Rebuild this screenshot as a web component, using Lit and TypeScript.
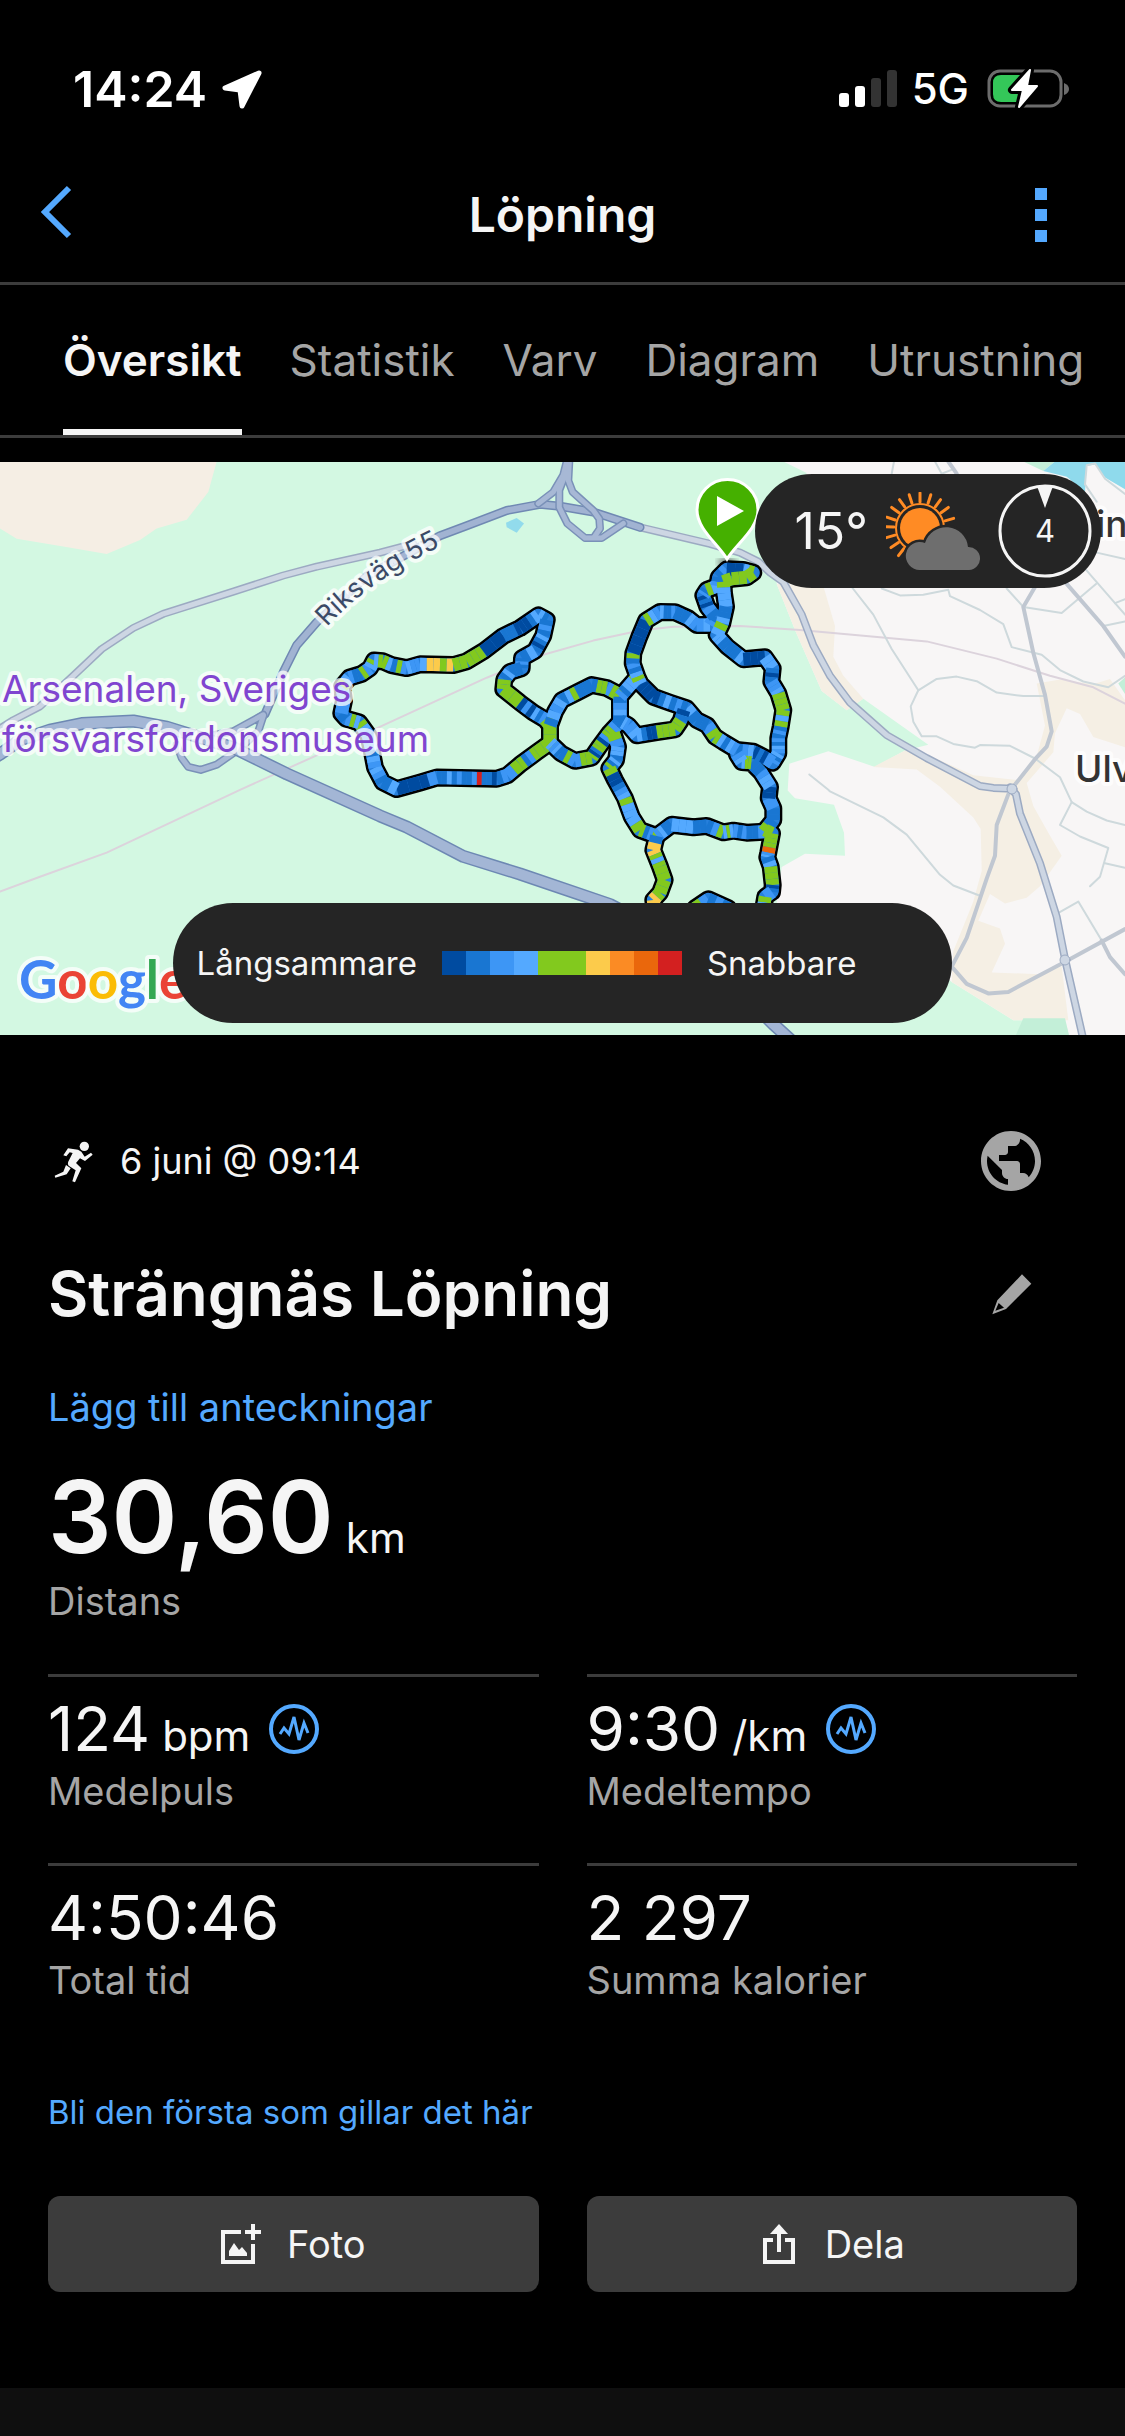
import { LitElement, html, svg, css } from "lit";
import { customElement } from "lit/decorators.js";

type Point = [number, number];
type Leg = [number, number, string?];
type Project = (x: number, y: number) => Point;

const sheet = (originX: number, stepY: number): Project => (x, y) => [originX + x / 3, y / stepY - 12];
const west = sheet(0, 2.613);
const centre = sheet(320, 2.613);
const north = sheet(560, 3);
const east = sheet(740, 2.613);

const points = (project: Project, flat: number[]): string => {
  const out: string[] = [];
  for (let i = 0; i < flat.length; i += 2) {
    out.push(project(flat[i], flat[i + 1]).map((n) => n.toFixed(1)).join(","));
  }
  return out.join(" ");
};

/* Pace scale, slow to fast. */
const pace: Record<string, string> = {
  "1": "#004ba0",
  "2": "#1976d2",
  "3": "#3d96f5",
  "4": "#54a9ff",
  g: "#82c91e",
  y: "#fccb4b",
  o: "#fb8b24",
  e: "#ea670c",
  r: "#d32020",
};

const track: { project: Project; legs: Leg[] }[] = [
  {
    project: centre,
    legs: [
      [690, 765, "gg"], [650, 790, "g32g"], [600, 822, "g3"], [562, 850, "32"], [530, 859, "122r32232422"],
      [350, 856, "31"], [300, 869, "11"], [230, 886, "42"], [188, 868, "234"], [165, 830, "342"],
      [155, 785, "43"], [145, 745, "34g"], [118, 712, "4g3"], [78, 702, "2"], [64, 688, "3"],
      [72, 655, "4"], [66, 618, "g4"], [88, 595, "322"], [125, 585, "g3"], [150, 570, "4g"],
      [162, 550, "4g"], [188, 552, "g4"], [215, 562, "2g3"], [260, 570, "433"], [300, 560, "4yygy"],
      [400, 562, "gg"], [440, 552, "ggg"], [490, 526, "11"], [550, 486, "2221"], [600, 465, "1124"],
      [655, 432, "42"], [680, 444, "232"], [670, 485, "4212"], [645, 525, "42"], [606, 544, "232"],
      [605, 570, "22"], [570, 580, "42"], [553, 600, "gg"], [550, 625, "gg"], [600, 660, "131"],
      [640, 686, "423"], [675, 704, "g"], [690, 720, "gg"], [690, 765],
    ],
  },
  {
    project: centre,
    legs: [
      [690, 765, "4342"], [722, 792, "2g3"], [765, 812, "3gg"], [815, 804, "g12g"], [838, 775, "g13g"],
      [868, 740, "g32"], [900, 710, "23"], [900, 640, "gg3"], [860, 622, "gg2"], [815, 614, "22"],
      [770, 634, "g42"], [725, 654, "43"], [705, 684, "42"], [690, 720],
    ],
  },
  {
    project: north,
    legs: [
      [180, 815, "2432"], [180, 740, "324"], [210, 706, "4g"], [232, 680, "423"], [218, 640, "2g"],
      [220, 610, "11"], [238, 560, "11"], [258, 512, "g43"], [300, 486, "4223"], [345, 487, "22"],
      [385, 505, "43"], [410, 525, "34"], [450, 525, "32"], [465, 500, "23"], [442, 470, "121"],
      [430, 436, "32"], [440, 420, "g4"], [472, 408, "32"], [476, 382, "23"], [500, 358, "11"],
      [550, 360, "4g"], [580, 368, "g"], [560, 382, "gg"], [515, 386, "g"], [490, 395, "g4"],
      [492, 430, "44"], [498, 470, "224"], [487, 520, "g4"], [470, 555, "4422"], [502, 590, "224"],
      [550, 628, "111"], [615, 622, "44"], [638, 655, "212"], [634, 695, "334"], [655, 730, "ggg"],
      [670, 780, "g4g"], [662, 830, "232"], [655, 865, "3243"], [655, 910, "423"], [638, 938, "3"],
      [618, 925, "121"], [580, 905, "432"], [530, 900, "342"], [490, 876, "4g"], [465, 860, "g3"],
      [442, 826, "22"], [410, 810, "24"], [380, 775, "232"], [330, 758, "421"], [280, 740, "111"],
      [242, 702, "4g"], [232, 680],
    ],
  },
  {
    project: north,
    legs: [
      [372, 780, "12"], [362, 812, "gg"], [345, 838, "ggg"], [290, 846, "1124"], [230, 856, "43"],
      [205, 826, "342"], [180, 812],
    ],
  },
  {
    project: north,
    legs: [
      [160, 850, "g3"], [174, 890, "442"], [168, 930, "42g"], [148, 955, "g1"], [165, 990, "1234"],
      [195, 1045, "g44"], [215, 1100, "4g"], [240, 1140, "g23g"], [290, 1158, "3422"], [335, 1124, "444"],
      [400, 1132, "22"], [440, 1128, "23g"], [490, 1147, "4g4"], [520, 1142, "323"], [560, 1148, "223"],
      [612, 1145, "g2"], [640, 1110, "22"], [640, 1075, "3"], [626, 1045, "11"], [630, 1010, "443"],
      [602, 966, "22"], [574, 938, "gg4"], [545, 936, "43"], [530, 912],
    ],
  },
  {
    project: north,
    legs: [
      [615, 1140, "gg"], [636, 1150, "ggg"], [628, 1192, "e"], [625, 1208, "34"], [622, 1222, "24"],
      [632, 1250, "ggg"], [638, 1305, "12"], [636, 1326, "3"], [616, 1340, "g4"], [610, 1375],
    ],
  },
  {
    project: north,
    legs: [
      [290, 1158, "2y"], [280, 1200, "yg4g"], [300, 1250, "gg"], [314, 1290, "gg"], [300, 1328, "gy"],
      [280, 1350, "y"], [283, 1375],
    ],
  },
  { project: north, legs: [[405, 1375, "g3"], [445, 1348, "232"], [505, 1375]] },
];

const wholeLine = (t: { project: Project; legs: Leg[] }) =>
  t.legs.map(([x, y]) => t.project(x, y).map((n) => n.toFixed(1)).join(",")).join(" ");

const paceSlices = track.flatMap(({ project, legs }) =>
  legs.slice(0, -1).flatMap(([x, y, codes = "2"], i) => {
    const [ax, ay] = project(x, y);
    const [bx, by] = project(legs[i + 1][0], legs[i + 1][1]);
    return [...codes].map((code, k) => {
      const s = k / codes.length;
      const e = (k + 1) / codes.length;
      return {
        colour: pace[code],
        x1: ax + (bx - ax) * s,
        y1: ay + (by - ay) * s,
        x2: ax + (bx - ax) * e,
        y2: ay + (by - ay) * e,
      };
    });
  })
);

const minorRoads: string[] = [
  points(east, [455, 62, 462, 30]),
  points(east, [585, 30, 605, 62, 640, 50]),
  points(east, [335, 358, 400, 430, 455, 520, 535, 628, 590, 598, 650, 592, 710, 604, 770, 634, 850, 643, 915, 643]),
  points(east, [535, 628, 512, 670, 520, 710, 545, 748, 590, 748, 640, 768, 705, 778, 720, 771, 810, 773, 885, 806, 960, 855, 995, 920, 1040, 945, 1100, 968, 1155, 980]),
  points(east, [425, 362, 480, 380, 550, 378, 625, 365, 630, 382, 720, 418, 790, 455, 815, 515, 905, 535, 960, 575, 1030, 605, 1105, 620, 1155, 590]),
  points(east, [800, 362, 850, 410, 965, 426, 1068, 350]),
  points(east, [995, 920, 960, 980, 1020, 1010, 1105, 1040, 1080, 1115, 1050, 1140]),
  points(east, [1095, 1080, 1155, 1092]),
  points(east, [208, 848, 265, 888, 270, 892, 430, 960, 500, 1005, 600, 1110, 640, 1138, 720, 1165]),
  points(east, [950, 1212, 1015, 1180, 1085, 1282]),
  points(east, [1035, 310, 1125, 400, 1155, 430]),
  points(east, [1090, 460, 1155, 448]),
  points(east, [1125, 400, 1155, 390]),
  points(east, [1070, 268, 1155, 285]),
  points(east, [1070, 135, 1035, 90, 1040, 40, 1065, 35, 1095, 75, 1155, 115]),
];

const townRoads: string[] = [
  points(east, [885, 358, 850, 410, 880, 530, 915, 640, 935, 735, 920, 775, 885, 808, 820, 880]),
  points(east, [625, 30, 650, 62]),
  points(east, [980, 350, 1090, 460, 1155, 540]),
  points(east, [805, 900, 770, 980, 765, 1060, 740, 1120, 680, 1275, 635, 1350, 680, 1395, 745, 1420, 805, 1416, 970, 1340, 1155, 1252]),
  points(east, [1085, 1282, 1110, 1325, 1155, 1370]),
];

const highways: string[] = [
  points(west, [-40, 815, 0, 795, 60, 758, 150, 732, 245, 715, 400, 708, 500, 724, 700, 778, 860, 846, 1140, 956, 1220, 985, 1390, 1062, 1560, 1108, 1830, 1188, 2100, 1310, 2320, 1500, 2370, 1540]),
];

const riksvag: string[] = [
  points(west, [770, 705, 795, 690, 820, 640, 850, 580, 890, 510, 950, 450, 1100, 330, 1320, 224, 1400, 198, 1520, 158, 1620, 142, 1680, 147, 1780, 162, 1920, 202]),
];

const ramps: string[] = [
  points(centre, [740, 30, 730, 65, 700, 110, 655, 140]),
  points(centre, [748, 30, 745, 80, 758, 110, 820, 158, 838, 180, 840, 205, 822, 228]),
  points(centre, [738, 60, 718, 105, 718, 150, 742, 192, 795, 230, 845, 230, 910, 192]),
  points(west, [790, 692, 700, 735, 640, 745]),
  points(west, [530, 770, 545, 805, 565, 828, 602, 836, 650, 822, 720, 780, 775, 735, 790, 695]),
];

const lightRoads: string[] = [
  points(west, [0, 728, 40, 706, 120, 670, 220, 590, 305, 520, 400, 465, 490, 428, 700, 370, 850, 328, 950, 305, 1140, 268, 1240, 245]),
  points(centre, [960, 202, 1170, 245, 1260, 268, 1315, 292, 1350, 320, 1390, 345, 1445, 430, 1480, 510, 1530, 590, 1590, 660, 1700, 745, 1820, 805, 1980, 878, 2020, 883, 2080, 885]),
  points(east, [810, 882, 828, 900, 840, 950, 900, 1080, 950, 1220, 975, 1330, 1030, 1540]),
];

const cased = (lines: string[], edge: string, fill: string, width: number) => svg`
  ${lines.map((p) => svg`<polyline points=${p} stroke=${edge} stroke-width=${width}></polyline>`)}
  ${lines.map((p) => svg`<polyline points=${p} stroke=${fill} stroke-width=${width - 3}></polyline>`)}`;

const googleLetters: [string, string][] = [
  ["G", "#4285f4"],
  ["o", "#ea4335"],
  ["o", "#fbbc05"],
  ["g", "#4285f4"],
  ["l", "#34a853"],
  ["e", "#ea4335"],
];

@customElement("route-map")
class RouteMap extends LitElement {
  static styles = css`
    :host {
      display: block;
      position: relative;
      overflow: hidden;
      font-family: Inter, "Liberation Sans", sans-serif;
      color: #f5f5f5;
    }
    .canvas {
      display: block;
      width: 100%;
      height: auto;
    }
    .label {
      font-family: Inter, sans-serif;
      paint-order: stroke;
      stroke: #ffffff;
      stroke-opacity: 0.75;
      stroke-width: 8px;
      stroke-linejoin: round;
    }
    .poi {
      font-size: 37px;
      fill: #8045d0;
    }
    .road-name {
      font-size: 27px;
      fill: #3b4a66;
    }
    .town {
      font-size: 37px;
      font-weight: 500;
      fill: #333333;
    }
    .brand {
      font-family: Lato, sans-serif;
      font-size: 53px;
      font-weight: 700;
    }
    .weather,
    .legend {
      display: flex;
      align-items: center;
      box-sizing: border-box;
      background: #252525;
      border-radius: 60px;
    }
    .weather {
      position: absolute;
      top: 12px;
      right: 24px;
      height: 114px;
      gap: 18px;
      padding: 0 9px 0 39px;
      font-size: 50px;
      line-height: 60px;
    }
    .wind-speed {
      font-family: Inter, sans-serif;
      font-size: 31px;
      fill: #f5f5f5;
    }
    .legend-row {
      position: absolute;
      left: 0;
      right: 0;
      bottom: 12px;
      display: flex;
      justify-content: center;
    }
    .legend {
      height: 120px;
      gap: 25px;
      padding: 0 96px 0 24px;
      font-size: 33px;
      line-height: 40px;
    }
    .scale {
      display: flex;
      height: 24px;
    }
    .swatch {
      width: 24px;
    }
    .c0 { background: #004ba0; }
    .c1 { background: #1976d2; }
    .c2 { background: #3d96f5; }
    .c3 { background: #54a9ff; }
    .c4 { background: #82c91e; }
    .c5 { background: #82c91e; }
    .c6 { background: #fccb4b; }
    .c7 { background: #fb8b24; }
    .c8 { background: #ea670c; }
    .c9 { background: #d32020; }
  `;

  private rays() {
    const angles = [-142, -124, -106, -88, -72, -54, -36, -18, 0, 18, 36, 54, 74];
    return angles.map(
      (a) => svg`<line x1="34" y1="10" x2="34" y2="1" transform="rotate(${a} 34 36)"></line>`
    );
  }

  render() {
    return html`
      <svg class="canvas" viewBox="0 0 1125 573" role="img" aria-label="Karta över löprundan">
        <defs>
          <path id="road-name-line" d="M327 165 Q372 116 446 82"></path>
          <filter id="soft"><feGaussianBlur stdDeviation="3"></feGaussianBlur></filter>
        </defs>
        <rect width="1125" height="573" fill="#d3f8e2"></rect>
        <polygon fill="#f5eee4" points=${points(west, [0, 30, 650, 30, 625, 110, 560, 182, 470, 205, 420, 235, 320, 272, 190, 252, 50, 232, 0, 205])}></polygon>
        <polygon fill="#f8f6f6" points=${points(east, [130, 30, 1160, 30, 1160, 1540, 990, 1540, 975, 1490, 820, 1490, 635, 1390, 500, 1300, 100, 1250, 125, 1090, 195, 1055, 315, 1060, 312, 1000, 282, 927, 165, 910, 143, 890, 148, 820, 265, 787, 405, 828, 495, 785, 565, 770, 370, 650, 320, 680, 245, 630, 165, 470, 110, 350, 110, 200, 200, 60])}></polygon>
        <polygon fill="#f5efe4" points=${points(east, [110, 350, 250, 355, 285, 460, 280, 540, 310, 590, 370, 650, 320, 680, 245, 630, 165, 470])}></polygon>
        <polygon fill="#f5efe4" points=${points(east, [400, 828, 495, 785, 560, 795, 700, 850, 830, 862, 890, 800, 915, 720, 890, 610, 960, 600, 1060, 612, 1110, 598, 1160, 660, 1160, 778, 1060, 750, 1020, 690, 980, 675, 945, 740, 940, 790, 860, 870, 880, 930, 925, 1000, 965, 1060, 900, 1140, 860, 1170, 795, 1185, 750, 1160, 715, 1230, 780, 1250, 795, 1290, 755, 1365, 900, 1370, 965, 1350, 985, 1490, 820, 1490, 635, 1390, 640, 1310, 700, 1180, 725, 1100, 722, 990, 700, 960, 600, 880, 530, 835])}></polygon>
        <polygon fill="#c3efd8" points=${points(east, [850, 1485, 975, 1485, 990, 1540, 822, 1540])}></polygon>
        <polygon fill="#c3efd8" points=${points(east, [1160, 590, 1135, 610, 1160, 645])}></polygon>
        <polygon fill="#c3efd8" points=${points(east, [850, 30, 945, 30, 910, 55])}></polygon>
        <polygon fill="#8fdaec" points=${points(east, [910, 55, 945, 30, 1160, 30, 1160, 105, 1095, 72, 1065, 38, 1040, 42, 1035, 110, 980, 70])}></polygon>
        <polygon fill="#92dbec" points=${points(centre, [558, 190, 590, 178, 612, 192, 590, 216, 560, 202])}></polygon>
        <g fill="none" stroke-linejoin="round" stroke-linecap="round">
          <polyline stroke="#dcd3dc" stroke-width="2" points=${points(west, [0, 1154, 120, 1115, 320, 1052, 540, 962, 720, 888, 950, 798, 1110, 735, 1460, 595, 1630, 535, 1780, 498, 1920, 472, 2020, 462, 2220, 460, 2400, 470, 2780, 500, 2990, 545, 3150, 590, 3280, 620, 3380, 665])}></polyline>
          <g stroke="#ced9dc" stroke-width="2">
            ${minorRoads.map((p) => svg`<polyline points=${p}></polyline>`)}
          </g>
          <g stroke="#c0c7d1" stroke-width="4">
            ${townRoads.map((p) => svg`<polyline points=${p}></polyline>`)}
          </g>
          ${cased(lightRoads, "#9caac2", "#cdd6e3", 8)}
          ${cased(riksvag, "#7089b3", "#a1b3d2", 9)}
          ${cased(ramps, "#7a91b8", "#a7b8d5", 8)}
          ${cased(highways, "#6d88b3", "#a3b6d5", 13)}
          <circle cx="1012" cy="327" r="5" fill="#cdd6e3" stroke="#9caac2" stroke-width="1"></circle>
          <circle cx="1065" cy="498" r="5" fill="#cdd6e3" stroke="#9caac2" stroke-width="1"></circle>
        </g>
        <g fill="none" stroke-linejoin="round" stroke-linecap="round">
          <ellipse cx="727" cy="100" rx="10" ry="3" fill="#555555" filter="url(#soft)"></ellipse>
          <g stroke="#000000" stroke-width="18">
            ${track.map((t) => svg`<polyline points=${wholeLine(t)}></polyline>`)}
          </g>
          <g stroke="#2780dc" stroke-width="13">
            ${track.map((t) => svg`<polyline points=${wholeLine(t)}></polyline>`)}
          </g>
          <g stroke-width="13" stroke-linecap="butt">
            ${paceSlices.map(
              (s) => svg`<line x1=${s.x1.toFixed(1)} y1=${s.y1.toFixed(1)} x2=${s.x2.toFixed(1)} y2=${s.y2.toFixed(1)} stroke=${s.colour}></line>`
            )}
          </g>
        </g>
        <path d="M727 97 C718 82 697 67 697 48 A30 30 0 0 1 758 48 C758 67 736 82 727 97Z" fill="#45b000" stroke="#ffffff" stroke-width="3"></path>
        <path d="M717 34 L744 49 L717 64Z" fill="#ffffff"></path>
        <text class="label road-name"><textPath href="#road-name-line">Riksväg 55</textPath></text>
        <text class="label poi" x="2" y="240">Arsenalen, Sveriges</text>
        <text class="label poi" x="2" y="290">försvarsfordonsmuseum</text>
        <text class="label town" x="1096" y="75">in</text>
        <text class="label town" x="1075" y="320">Ulv</text>
        <text class="label brand" x="19" y="537">${googleLetters.map(([l, c]) => svg`<tspan fill=${c}>${l}</tspan>`)}</text>
      </svg>

      <div class="weather">
        <span>15°</span>
        <svg width="94" height="78" viewBox="0 0 94 78" role="img" aria-label="Halvklart">
          <g stroke="#ff8b24" stroke-width="3" stroke-linecap="round">${this.rays()}</g>
          <circle cx="34" cy="36" r="24" fill="#252525" stroke="#ff8b24" stroke-width="2"></circle>
          <circle cx="34" cy="36" r="20" fill="#ff8b24"></circle>
          <path d="M34 78 A14 14 0 1 1 39 51 A22 22 0 0 1 82 55 A11.500 11.500 0 1 1 83 78Z" fill="#6e6e6e" stroke="#252525" stroke-width="5" paint-order="stroke"></path>
        </svg>
        <svg width="94" height="94" viewBox="0 0 94 94" role="img" aria-label="Vind 4">
          <circle cx="47" cy="47" r="45" fill="none" stroke="#f5f5f5" stroke-width="3"></circle>
          <path d="M39 2 H55 L47 24Z" fill="#f5f5f5"></path>
          <text class="wind-speed" x="47" y="58" text-anchor="middle">4</text>
        </svg>
      </div>

      <div class="legend-row">
        <div class="legend">
          <span>Långsammare</span>
          <span class="scale">${Array.from({ length: 10 }, (_, i) => html`<span class="swatch c${i}"></span>`)}</span>
          <span>Snabbare</span>
        </div>
      </div>
    `;
  }
}

interface Stat {
  value: string;
  unit?: string;
  label: string;
  chart?: boolean;
}

const stats: Stat[] = [
  { value: "124", unit: "bpm", label: "Medelpuls", chart: true },
  { value: "9:30", unit: "/km", label: "Medeltempo", chart: true },
  { value: "4:50:46", label: "Total tid" },
  { value: "2 297", label: "Summa kalorier" },
];

const tabs = ["Översikt", "Statistik", "Varv", "Diagram", "Utrustning"];

@customElement("app-root")
class AppRoot extends LitElement {
  static styles = css`
    :host {
      display: flex;
      flex-direction: column;
      min-height: 100vh;
      overflow: hidden;
      background: #000000;
      color: #f5f5f5;
      font-family: Inter, "Liberation Sans", sans-serif;
    }
    button {
      font: inherit;
      color: inherit;
      background: none;
      border: 0;
      padding: 0;
      cursor: pointer;
    }
    a {
      color: inherit;
      text-decoration: none;
    }
    svg {
      display: block;
      flex: none;
    }
    .status {
      display: flex;
      align-items: center;
      justify-content: space-between;
      height: 118px;
      padding: 30px 56px 0 73px;
      color: #ffffff;
    }
    .clock,
    .signals {
      display: flex;
      align-items: center;
      gap: 15px;
    }
    .clock {
      font-size: 50px;
      font-weight: 600;
      line-height: 60px;
    }
    .signals {
      font-size: 42px;
      font-weight: 500;
      line-height: 50px;
    }
    .bar {
      display: grid;
      grid-template-columns: 1fr auto 1fr;
      align-items: center;
      height: 134px;
      padding: 0 36px;
      border-bottom: 3px solid #3c3c3c;
    }
    .heading {
      margin: 0;
      font-size: 48px;
      font-weight: 600;
      line-height: 60px;
    }
    .back {
      justify-self: start;
      padding-bottom: 6px;
    }
    .more {
      justify-self: end;
      padding: 0 36px;
    }
    .tabs {
      display: flex;
      gap: 48px;
      height: 150px;
      padding: 0 63px;
      border-bottom: 3px solid #3c3c3c;
      font-size: 44px;
      line-height: 150px;
      color: #a5a5a5;
      white-space: nowrap;
    }
    .tab {
      box-sizing: border-box;
      height: 150px;
    }
    .tab.active {
      color: #f5f5f5;
      font-weight: 600;
      border-bottom: 6px solid #f5f5f5;
    }
    .map {
      margin-top: 24px;
    }
    .details {
      display: flex;
      flex-direction: column;
      padding: 96px 48px;
    }
    .row {
      display: flex;
      align-items: center;
      justify-content: space-between;
      padding-right: 36px;
    }
    .when {
      display: flex;
      align-items: center;
      gap: 26px;
      height: 60px;
      padding-left: 5px;
      font-size: 36px;
    }
    .name-row {
      margin-top: 63px;
      padding-right: 45px;
    }
    .name {
      margin: 0;
      font-size: 62px;
      font-weight: 600;
      line-height: 80px;
    }
    .link {
      align-self: flex-start;
      color: #54a9ff;
      line-height: 48px;
    }
    .notes {
      margin-top: 49px;
      font-size: 38px;
    }
    .likes {
      margin-top: 36px;
      font-size: 33px;
    }
    .distance {
      margin-top: 36px;
    }
    .value {
      display: flex;
      align-items: baseline;
      gap: 12px;
      font-size: 62px;
      line-height: 72px;
    }
    .distance .value {
      margin-bottom: 10px;
      font-size: 100px;
      font-weight: 600;
      line-height: 100px;
    }
    .value .unit {
      font-size: 42px;
      font-weight: 400;
      line-height: 42px;
    }
    .label {
      font-size: 38px;
      line-height: 48px;
      color: #a5a5a5;
    }
    .grid {
      display: grid;
      grid-template-columns: 1fr 1fr;
      column-gap: 48px;
      margin-top: 49px;
    }
    .cell {
      padding: 16px 0 48px;
      border-top: 3px solid #3c3c3c;
    }
    .figure {
      display: flex;
      align-items: center;
      gap: 19px;
      margin-bottom: 2px;
    }
    .actions {
      display: grid;
      grid-template-columns: 1fr 1fr;
      gap: 48px;
      margin-top: 60px;
    }
    .action {
      display: flex;
      align-items: center;
      justify-content: center;
      gap: 26px;
      height: 96px;
      border-radius: 12px;
      background: #3c3c3c;
      font-size: 38px;
    }
    .footer {
      flex: 1;
      min-height: 48px;
      background: #0f0f0f;
    }
  `;

  private chartIcon() {
    return html`<svg width="50" height="50" viewBox="-25 -25 50 50" fill="none" stroke="#54a9ff" aria-hidden="true">
      <circle r="23" stroke-width="4"></circle>
      <path d="M-14 5 L-10 -1 L-5 5 L0 -12 L5 11 L10 -6 L14 4" stroke-width="3" stroke-linejoin="miter"></path>
    </svg>`;
  }

  private cell(s: Stat) {
    return html`<div class="cell">
      <div class="figure">
        <div class="value"><span>${s.value}</span>${s.unit ? html`<span class="unit">${s.unit}</span>` : ""}</div>
        ${s.chart ? html`<button aria-label="Visa diagram: ${s.label}">${this.chartIcon()}</button>` : ""}
      </div>
      <div class="label">${s.label}</div>
    </div>`;
  }

  render() {
    return html`
      <div class="status">
        <div class="clock">
          <span>14:24</span>
          <svg width="40" height="39" viewBox="0 0 40 39" aria-hidden="true">
            <path d="M37 3 L3 18 L18 20 L20 36Z" fill="#fff" stroke="#fff" stroke-width="5" stroke-linejoin="round"></path>
          </svg>
        </div>
        <div class="signals">
          <svg width="58" height="38" viewBox="0 0 58 38" aria-hidden="true">
            <rect x="0" y="23" width="10" height="14" rx="3" fill="#fff"></rect>
            <rect x="16" y="16" width="10" height="21" rx="3" fill="#fff"></rect>
            <rect x="32" y="8" width="10" height="29" rx="3" fill="#333"></rect>
            <rect x="48" y="0" width="10" height="37" rx="3" fill="#333"></rect>
          </svg>
          <span>5G</span>
          <svg width="85" height="46" viewBox="0 0 85 46" aria-hidden="true">
            <rect x="5" y="5" width="72" height="35" rx="11" fill="none" stroke="#6c6c6c" stroke-width="3"></rect>
            <path d="M80 17 Q85 19 85 23 Q85 27 80 29Z" fill="#6c6c6c"></path>
            <path d="M17 9 H36 V36 H17 Q9 36 9 28 V17 Q9 9 17 9Z" fill="#34c759"></path>
            <path d="M46 4 L28 24 H39 L35 41 L53 20 H43Z" fill="#fff" stroke="#000" stroke-width="8" stroke-linejoin="round"></path>
            <path d="M46 4 L28 24 H39 L35 41 L53 20 H43Z" fill="#fff" stroke="#fff" stroke-width="2" stroke-linejoin="round"></path>
          </svg>
        </div>
      </div>

      <header class="bar">
        <button class="back" aria-label="Tillbaka">
          <svg width="36" height="60" viewBox="0 0 36 60"><path d="M33 6 L9 30 L33 54" fill="none" stroke="#54a9ff" stroke-width="6"></path></svg>
        </button>
        <h1 class="heading">Löpning</h1>
        <button class="more" aria-label="Mer">
          <svg width="24" height="54" viewBox="0 0 24 54" fill="#54a9ff">
            <rect x="6" y="0" width="12" height="12"></rect>
            <rect x="6" y="21" width="12" height="12"></rect>
            <rect x="6" y="42" width="12" height="12"></rect>
          </svg>
        </button>
      </header>

      <nav class="tabs">
        ${tabs.map((t, i) => html`<a class="tab ${i === 0 ? "active" : ""}" href="#">${t}</a>`)}
      </nav>

      <route-map class="map"></route-map>

      <main class="details">
        <div class="row">
          <div class="when">
            <svg width="41" height="43" viewBox="37 27 123 129" fill="#f5f5f5" aria-hidden="true">
              <circle cx="131" cy="46" r="14"></circle>
              <path d="M68 73 L82 52 L112 56 L122 62 L132 77 L151 65 L156 71 L133 90 L118 82 L106 96 L122 112 L103 154 L95 151 L105 118 L84 104 Q79 98 85 88 L96 66 L87 64 L77 76Z"></path>
              <path d="M76 102 L90 112 L78 130 L44 140 L42 134 L68 122Z"></path>
            </svg>
            <span>6 juni @ 09:14</span>
          </div>
          <svg width="60" height="60" viewBox="2 2 20 20" fill="#a5a5a5" role="img" aria-label="Offentlig">
            <path d="M12 2C6.480 2 2 6.480 2 12s4.480 10 10 10 10-4.480 10-10S17.520 2 12 2zm-1 17.930c-3.950-.490-7-3.850-7-7.930 0-.620.080-1.210.210-1.790L9 15v1c0 1.100.900 2 2 2v1.930zm6.900-2.540c-.260-.810-1-1.390-1.900-1.390h-1v-3c0-.550-.450-1-1-1H8v-2h2c.550 0 1-.450 1-1V7h2c1.100 0 2-.900 2-2v-.410c2.930 1.190 5 4.060 5 7.410 0 2.080-.800 3.970-2.100 5.390z"></path>
          </svg>
        </div>

        <div class="row name-row">
          <h2 class="name">Strängnäs Löpning</h2>
          <button aria-label="Redigera namn">
            <svg width="40" height="41" viewBox="64 459 120 123" fill="#a5a5a5">
              <path fill-rule="evenodd" d="M154 460 L182 488 L106 564 L65 580 L80 538Z M84 546 L74 569 L100 560Z"></path>
            </svg>
          </button>
        </div>

        <a class="link notes" href="#">Lägg till anteckningar</a>

        <div class="distance">
          <div class="value"><span>30,60</span><span class="unit">km</span></div>
          <div class="label">Distans</div>
        </div>

        <div class="grid">${stats.map((s) => this.cell(s))}</div>

        <a class="link likes" href="#">Bli den första som gillar det här</a>

        <div class="actions">
          <button class="action">
            <svg width="40" height="40" viewBox="0 0 40 40" aria-hidden="true">
              <path d="M20 8 H2 V38 H32 V20" fill="none" stroke="#f5f5f5" stroke-width="4"></path>
              <path d="M32 0 V16 M24 8 H40" stroke="#f5f5f5" stroke-width="4"></path>
              <path d="M8 32 V27 L13 19 L18 26 L21 23 L26 29 V32Z" fill="#f5f5f5"></path>
            </svg>
            Foto
          </button>
          <button class="action">
            <svg width="40" height="40" viewBox="-4 0 40 40" aria-hidden="true">
              <path d="M10 16 H2 V38 H30 V16 H22" fill="none" stroke="#f5f5f5" stroke-width="4"></path>
              <path d="M16 28 V6" stroke="#f5f5f5" stroke-width="4"></path>
              <path d="M16 0 L25 10 H7Z" fill="#f5f5f5"></path>
            </svg>
            Dela
          </button>
        </div>
      </main>
      <div class="footer"></div>
    `;
  }
}
